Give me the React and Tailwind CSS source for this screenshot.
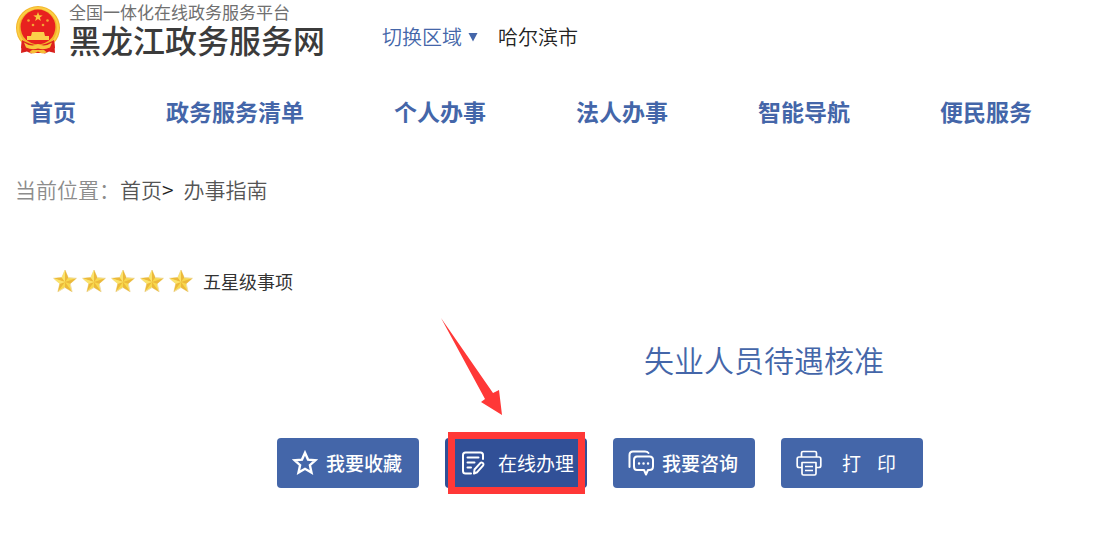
const NAV_ITEMS = ["首页", "政务服务清单", "个人办事", "法人办事", "智能导航", "便民服务"];

const STAR = "12,1 15.2,8.6 23.4,9.3 17.2,14.7 19.1,22.8 12,18.5 4.9,22.8 6.8,14.7 0.6,9.3 8.8,8.6";

function Emblem() {
  return (
    <svg viewBox="0 0 46 48" className="h-12 w-[46px] shrink-0" aria-hidden="true">
      <path d="M7 33 L6 47 L12 45.500 L16 47.500 L23 46 L30 47.500 L34 45.500 L40 47 L39 33 Z" fill="#d81f1c" />
      <circle cx="23" cy="22" r="22" fill="#f3b52b" />
      <circle cx="23" cy="22" r="20" fill="none" stroke="#fbcf45" strokeWidth="2" />
      <circle cx="23" cy="21" r="17.400" fill="#e8211f" />
      <polygon
        points="23,6 24.2,9.300 27.700,9.400 24.900,11.500 25.900,14.900 23,12.900 20.100,14.900 21.100,11.500 18.300,9.400 21.800,9.300"
        fill="#f9c63d"
      />
      <g fill="#f4a433">
        <circle cx="13.500" cy="14.500" r="1.300" />
        <circle cx="32.500" cy="14.500" r="1.300" />
        <circle cx="18" cy="19" r="1.300" />
        <circle cx="28" cy="19" r="1.300" />
      </g>
      <path d="M17 26 h12 l1 4 h4 v4 H12 v-4 h4 z" fill="#fbd04a" />
      <path d="M7 34 q8 5 16 5 t16 -5 l1 8 q-8 5 -17 5 t-17 -5 z" fill="#dd211d" />
      <path d="M9 36.500 q7 5 14 1.500 q7 3.500 14 -1.500 l-2 5 q-6 3 -12 1 q-6 2 -12 -1 z" fill="#f8c63c" />
      <path d="M14 46.500 l3 -2.500 h12 l3 2.500 l-5 1 l-4 -2 l-4 2 z" fill="#f6bd35" />
    </svg>
  );
}

function GoldStar() {
  return (
    <svg viewBox="0 0 24 24" className="size-6" aria-hidden="true">
      <polygon points={STAR} fill="#f8d84c" stroke="#f0dfae" strokeWidth="1" />
      <path d="M12 13 L12 1 L15.200 8.600 Z M12 13 L23.400 9.300 L17.200 14.700 Z M12 13 L19.100 22.800 L12 18.500 Z M12 13 L4.900 22.800 L6.800 14.700 Z M12 13 L0.600 9.300 L8.800 8.600 Z" fill="#ecb93a" />
      <path d="M12 13 L12 1 L8.800 8.600 Z M12 13 L0.600 9.300 L6.800 14.700 Z" fill="#fbe36a" />
    </svg>
  );
}

function StarIcon() {
  return (
    <svg viewBox="0 0 26 26" className="size-[26px]" fill="none" stroke="currentColor" strokeWidth="2.400" aria-hidden="true">
      <path d="M13 2.800 L16 9.600 L23.400 10.300 L17.900 15.200 L19.500 22.600 L13 18.800 L6.500 22.600 L8.100 15.200 L2.600 10.300 L10 9.600 Z" />
    </svg>
  );
}

function FormIcon() {
  return (
    <svg viewBox="0 0 26 26" className="size-[26px]" fill="none" stroke="currentColor" strokeWidth="2" strokeLinecap="round" strokeLinejoin="round" aria-hidden="true">
      <path d="M11 23.500 H5.500 Q3 23.500 3 21 V5 Q3 2.500 5.500 2.500 H20.500 Q23 2.500 23 5 V9" />
      <path d="M7.500 7.500 H18.500 M7.500 12.500 H14.500 M7.500 17.500 H11" />
      <path d="M14 23.500 L14.500 19.500 L20.500 12.800 Q21.500 12 22.800 13 Q24 14.200 23.200 15.400 L17.200 22.200 Z" />
    </svg>
  );
}

function ChatIcon() {
  return (
    <svg viewBox="0 0 26 26" className="size-[26px]" fill="none" stroke="currentColor" strokeWidth="2" strokeLinecap="round" strokeLinejoin="round" aria-hidden="true">
      <path d="M1.500 17 V5 Q1.500 1.500 5 1.500 H17 Q19.500 1.500 20.500 3" />
      <path d="M9 6.500 H21.500 Q25 6.500 25 10 V16.500 Q25 20 21.500 20 H20 L18 24.500 L16 20 H9 Q6 20 6 16.500 V10 Q6 6.500 9 6.500 Z" />
      <path d="M11 13.500 h0.100 M15.500 13.500 h0.100 M20 13.500 h0.100" strokeWidth="2.400" />
    </svg>
  );
}

function PrinterIcon() {
  return (
    <svg viewBox="0 0 26 26" className="size-[26px]" fill="none" stroke="currentColor" strokeWidth="1.700" strokeLinejoin="round" aria-hidden="true">
      <path d="M5.500 7 V3 Q5.500 1.500 7 1.500 H19 Q20.500 1.500 20.500 3 V7" />
      <path d="M6 17.500 H3 Q1.200 17.500 1.200 15.500 V9 Q1.200 7 3 7 H23 Q24.800 7 24.800 9 V15.500 Q24.800 17.500 23 17.500 H20" />
      <path d="M6 12.500 H20 V23.500 Q20 25 18.500 25 H7.500 Q6 25 6 23.500 Z M9 16.500 H17 M9 20.500 H17" />
    </svg>
  );
}

const ACTIONS = [
  { label: "我要收藏", Icon: StarIcon },
  { label: "在线办理", Icon: FormIcon, highlighted: true },
  { label: "我要咨询", Icon: ChatIcon },
  { label: "打 印", Icon: PrinterIcon, spaced: true },
];

function ActionButton({ label, Icon, highlighted, spaced }) {
  return (
    <div className="relative">
      <button
        type="button"
        className={`flex h-[50px] w-[142px] items-center rounded pl-[15px] text-[19px] leading-7 text-white ${
          highlighted ? "bg-[#315097] font-normal" : "bg-[#4466a9] font-medium"
        }`}
      >
        <Icon />
        {spaced ? (
          <span className="flex gap-4 pl-5 font-normal">
            <span>打</span>
            <span>印</span>
          </span>
        ) : (
          <span className={highlighted ? "pl-3" : "pl-2"}>{label}</span>
        )}
      </button>
      {highlighted && (
        <>
          <div className="pointer-events-none absolute -top-1.5 left-[3px] h-[62px] w-[137px] border-[7px] border-[#ff3837]" />
          <svg viewBox="0 0 62 98" className="pointer-events-none absolute -top-[120px] -left-1 h-[98px] w-[62px]" aria-hidden="true">
            <polygon points="0,0 52,75 58,72 61,97 40,84 44,81" fill="#ff3837" />
          </svg>
        </>
      )}
    </div>
  );
}

export default function App() {
  return (
    <div className="bg-white pb-14 font-['Noto_Sans_CJK_SC',sans-serif]">
      <header className="flex items-start pl-[15px] whitespace-nowrap">
        <a href="#home" className="flex gap-2 pt-1.5 text-[#3b3b3b]">
          <Emblem />
          <span className="-mt-[5px] flex flex-col">
            <span className="text-[17px] leading-[22px] text-[#707070]">全国一体化在线政务服务平台</span>
            <span className="text-[32px] leading-8 font-medium">黑龙江政务服务网</span>
          </span>
        </a>
        <div className="flex items-center gap-5 pt-[23px] pl-[57px] text-xl leading-7 font-[350]">
          <button type="button" className="flex items-center gap-1.5 text-[#4466a9]">
            切换区域
            <svg viewBox="0 0 10 10" className="size-2.5" aria-hidden="true">
              <path d="M0.500 1 H9.500 L5 9.500 Z" fill="currentColor" />
            </svg>
          </button>
          <span className="text-[#222]">哈尔滨市</span>
        </div>
      </header>

      <nav className="mt-10 flex gap-[90px] pl-[30px] text-[23px] leading-8 font-bold whitespace-nowrap text-[#4466a9]">
        {NAV_ITEMS.map((item) => (
          <a key={item} href="#nav">
            {item}
          </a>
        ))}
      </nav>

      <div className="mt-[46px] flex pl-[15px] text-[21px] leading-8 font-[350] text-[#555]">
        <span className="text-[#8c8c8c]">当前位置：</span>
        <a href="#home">首页</a>
        <span className="pr-2.5 text-[#222]">&gt;</span>
        <a href="#guide">办事指南</a>
      </div>

      <div className="mt-[62px] flex items-center pl-[53px]">
        <div className="flex gap-[5px]">
          {[1, 2, 3, 4, 5].map((n) => (
            <GoldStar key={n} />
          ))}
        </div>
        <span className="pl-2.5 text-lg leading-7 text-[#333]">五星级事项</span>
      </div>

      <h1 className="mt-11 pl-[644px] text-[30px] leading-10 font-[350] whitespace-nowrap text-[#4466a9]">失业人员待遇核准</h1>

      <div className="mt-[59px] flex gap-[26px] pl-[277px]">
        {ACTIONS.map((action) => (
          <ActionButton key={action.label} {...action} />
        ))}
      </div>
    </div>
  );
}
